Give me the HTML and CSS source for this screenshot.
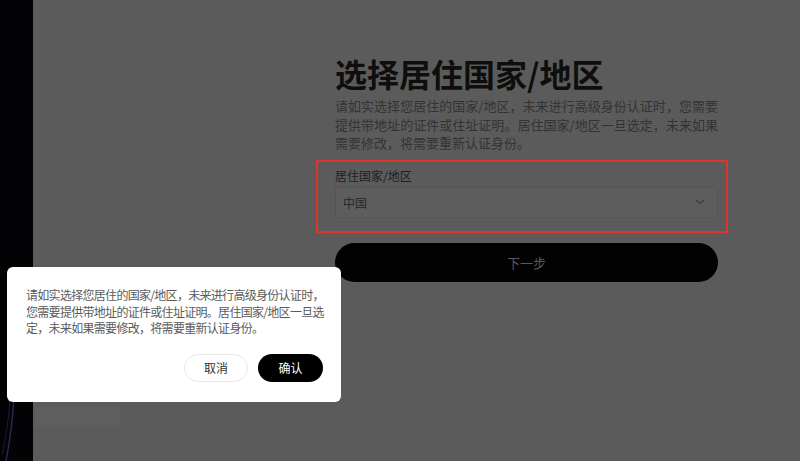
FILE: index.html
```html
<!DOCTYPE html>
<html lang="zh-CN">
<head>
<meta charset="utf-8">
<title>选择居住国家/地区</title>
<link rel="stylesheet" href="styles.css">
</head>
<body>
<div class="page">
  <aside class="side">
    <svg class="side-art" width="33" height="461" viewBox="0 0 33 461">
      <path d="M6 461 C10 440 13 420 14 395" stroke="#2a2650" stroke-width="1.5" fill="none"/>
      <path d="M2 455 C6 435 9 418 10 400" stroke="#1c1a38" stroke-width="1" fill="none"/>
    </svg>
  </aside>
  <main class="main">
    <section class="form">
      <h1 class="title">选择居住国家/地区</h1>
      <p class="desc"><span class="jl">请如实选择您居住的国家/地区，未来进行高级身份认证时，您需要</span><span class="jl">提供带地址的证件或住址证明。居住国家/地区一旦选定，未来如果</span><span class="ll">需要修改，将需要重新认证身份。</span></p>
      <div class="field">
        <div class="field-mark"></div>
        <label class="label">居住国家/地区</label>
        <div class="select">
          <span>中国</span>
          <svg class="chev" width="10" height="6" viewBox="0 0 10 6"><path d="M1 1 L5 4.5 L9 1" stroke="#3e3e3e" stroke-width="1.2" fill="none"/></svg>
        </div>
      </div>
      <button class="next">下一步</button>
    </section>
    <div class="ghost"></div>
  </main>
  <div class="modal">
    <p class="modal-text">请如实选择您居住的国家/地区，未来进行高级身份认证时，<br>您需要提供带地址的证件或住址证明。居住国家/地区一旦选<br>定，未来如果需要修改，将需要重新认证身份。</p>
    <div class="modal-actions">
      <button class="btn btn-cancel">取消</button>
      <button class="btn btn-ok">确认</button>
    </div>
  </div>
</div>
</body>
</html>
```
FILE: styles.css
```css
* { box-sizing: border-box; }
html, body { margin: 0; padding: 0; }
body {
  width: 800px;
  height: 461px;
  overflow: hidden;
  font-family: "Noto Sans CJK SC", "Liberation Sans", sans-serif;
}
.page {
  position: relative;
  display: flex;
  width: 800px;
  height: 461px;
}
.side {
  width: 33px;
  flex: none;
  background: #030305;
}
.side-art { display: block; }
.main {
  flex: 1;
  background: #5b5b5b;
  padding: 50px 0 0 302px;
  position: relative;
}
.form {
  width: 383px;
  display: flex;
  flex-direction: column;
}
.title {
  margin: 0;
  font-size: 32px;
  line-height: 46px;
  font-weight: 700;
  color: #0e0e0e;
}
.desc {
  margin: 1px 0 0;
  font-size: 13px;
  line-height: 18.5px;
  color: #333;
}
.jl {
  display: block;
  text-align: justify;
  text-align-last: justify;
}
.ll { display: block; }
.field {
  position: relative;
  margin-top: 15px;
  display: flex;
  flex-direction: column;
}
.field-mark {
  position: absolute;
  left: -19px;
  top: -8px;
  width: 412px;
  height: 73px;
  border: 2.5px solid #e0332b;
}
.label {
  font-size: 12px;
  line-height: 16px;
  color: #1e1e1e;
}
.select {
  margin-top: 3px;
  height: 31px;
  border: 1px solid #555;
  background: #5d5d5d;
  display: flex;
  align-items: center;
  justify-content: space-between;
  padding: 0 12px 0 7px;
  font-size: 12px;
  color: #262626;
}
.chev { display: block; }
.next {
  margin-top: 25px;
  height: 39px;
  border: 0;
  border-radius: 20px;
  background: #020202;
  color: #5a5a5a;
  font-family: inherit;
  font-size: 13px;
  cursor: pointer;
}
.ghost {
  position: absolute;
  left: 2px;
  top: 407px;
  width: 85px;
  height: 20px;
  background: #5e5e5e;
}
.modal {
  position: absolute;
  left: 7px;
  top: 267px;
  width: 334px;
  height: 135px;
  background: #fff;
  border-radius: 6px;
  padding: 20px 18px 0 19px;
}
.modal-text {
  margin: 0;
  font-size: 12px;
  line-height: 16.5px;
  letter-spacing: -0.7px;
  color: #5a5a5a;
  white-space: nowrap;
}
.modal-actions {
  margin-top: 17px;
  display: flex;
  justify-content: flex-end;
  gap: 10px;
}
.btn {
  width: 64px;
  height: 28px;
  border-radius: 14px;
  font-family: inherit;
  font-size: 12px;
  cursor: pointer;
}
.btn-cancel {
  background: #fff;
  border: 1px solid #e6e6e6;
  color: #333;
}
.btn-ok {
  width: 65px;
  background: #000;
  border: 0;
  color: #fff;
}
```
